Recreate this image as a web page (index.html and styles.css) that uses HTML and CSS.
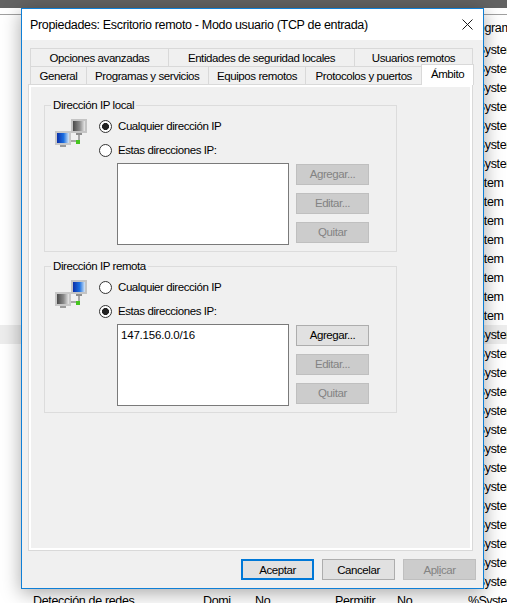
FILE: index.html
```html
<!DOCTYPE html>
<html lang="es">
<head>
<meta charset="utf-8">
<title>Propiedades: Escritorio remoto</title>
<link rel="stylesheet" href="styles.css">
</head>
<body>
<div class="desktop">
  <div class="topbar"></div>
  <div class="listhead"></div>
  <div class="row row-first"><span class="val v-gram">Programa</span></div>
  <div class="rows">
    <div class="row"><span class="val">%System</span></div>
    <div class="row"><span class="val">%System</span></div>
    <div class="row"><span class="val">%System</span></div>
    <div class="row"><span class="val">%System</span></div>
    <div class="row"><span class="val">%System</span></div>
    <div class="row"><span class="val">%System</span></div>
    <div class="row"><span class="val">%System</span></div>
    <div class="row"><span class="val v-tem">System</span></div>
    <div class="row"><span class="val v-tem">System</span></div>
    <div class="row"><span class="val v-tem">System</span></div>
    <div class="row"><span class="val v-tem">System</span></div>
    <div class="row"><span class="val v-tem">System</span></div>
    <div class="row"><span class="val v-tem">System</span></div>
    <div class="row"><span class="val v-tem">System</span></div>
    <div class="row"><span class="val v-tem">System</span></div>
    <div class="row row-sel"><span class="val">%System</span></div>
    <div class="row"><span class="val">%System</span></div>
    <div class="row"><span class="val">%System</span></div>
    <div class="row"><span class="val">%System</span></div>
    <div class="row"><span class="val">%System</span></div>
    <div class="row"><span class="val">%System</span></div>
    <div class="row"><span class="val">%System</span></div>
    <div class="row"><span class="val">%System</span></div>
    <div class="row"><span class="val">%System</span></div>
    <div class="row"><span class="val">%System</span></div>
    <div class="row"><span class="val">%System</span></div>
    <div class="row"><span class="val">%System</span></div>
    <div class="row"><span class="val">%System</span></div>
    <div class="row"><span class="val">%System</span></div>
    <div class="row row-last">
      <span class="c c1">Detección de redes</span>
      <span class="c c2">Domi</span>
      <span class="c c3">No</span>
      <span class="c c4">Permitir</span>
      <span class="c c5">No</span>
      <span class="c c6">%System</span>
    </div>
  </div>
</div>

<section class="dialog">
  <header class="titlebar">
    <h1 class="title">Propiedades: Escritorio remoto - Modo usuario (TCP de entrada)</h1>
    <svg class="close" width="11" height="11" viewBox="0 0 11 11"><path d="M0.5 0.5L10.5 10.5M10.5 0.5L0.5 10.5" stroke="#1a1a1a" stroke-width="1" fill="none"/></svg>
  </header>
  <div class="dbody">
    <div class="tabs">
      <div class="tabrow tabrow-top">
        <div class="tab t-a">Opciones avanzadas</div>
        <div class="tab t-b">Entidades de seguridad locales</div>
        <div class="tab t-c">Usuarios remotos</div>
      </div>
      <div class="tabrow tabrow-bot">
        <div class="tab t-d">General</div>
        <div class="tab t-e">Programas y servicios</div>
        <div class="tab t-f">Equipos remotos</div>
        <div class="tab t-g">Protocolos y puertos</div>
        <div class="tab tab-on">Ámbito</div>
      </div>
    </div>
    <div class="panel">
      <fieldset class="group">
        <legend class="legend">Dirección IP local</legend>
        <div class="gcontent">
          <svg class="netic" width="34" height="32" viewBox="0 0 34 32">
            <defs>
              <linearGradient id="gBlue" x1="0" x2="1" y1="0" y2="0"><stop offset="0" stop-color="#0b2fa8"/><stop offset=".55" stop-color="#1c6fe0"/><stop offset="1" stop-color="#d5e6f5"/></linearGradient>
              <linearGradient id="gGray" x1="0" x2="1" y1="0" y2="0"><stop offset="0" stop-color="#4a4a4a"/><stop offset=".55" stop-color="#8a8a8a"/><stop offset="1" stop-color="#e8e8e8"/></linearGradient>
            </defs>
            <path d="M25 17V24H12" stroke="#a8a8a8" stroke-width="2" fill="none"/>
            <rect x="17" y="2" width="16" height="14" fill="#c4c4c4"/>
            <rect x="19" y="4" width="12" height="10" fill="url(#gGray)"/>
            <rect x="22" y="16" width="6" height="2" fill="#8e8e8e"/>
            <rect x="1" y="14" width="16" height="14" fill="#c8c8c8"/>
            <rect x="3" y="16" width="12" height="10" fill="url(#gBlue)"/>
            <rect x="6" y="28" width="6" height="2" fill="#9a9a9a"/>
            <rect x="22" y="23" width="4" height="4" fill="#46c41f"/>
          </svg>
          <div class="gmain">
            <label class="radio"><span class="dot dot-on"></span><span>Cualquier dirección IP</span></label>
            <label class="radio"><span class="dot"></span><span>Estas direcciones IP:</span></label>
            <div class="listrow">
              <div class="listbox"></div>
              <div class="btncol">
                <div class="btn off">Agregar...</div>
                <div class="btn off">Editar...</div>
                <div class="btn off">Quitar</div>
              </div>
            </div>
          </div>
        </div>
      </fieldset>
      <fieldset class="group group2">
        <legend class="legend">Dirección IP remota</legend>
        <div class="gcontent">
          <svg class="netic" width="34" height="32" viewBox="0 0 34 32">
            <path d="M25 17V24H12" stroke="#a8a8a8" stroke-width="2" fill="none"/>
            <rect x="17" y="2" width="16" height="14" fill="#c4c4c4"/>
            <rect x="19" y="4" width="12" height="10" fill="url(#gBlue)"/>
            <rect x="22" y="16" width="6" height="2" fill="#8e8e8e"/>
            <rect x="1" y="14" width="16" height="14" fill="#c8c8c8"/>
            <rect x="3" y="16" width="12" height="10" fill="url(#gGray)"/>
            <rect x="6" y="28" width="6" height="2" fill="#9a9a9a"/>
            <rect x="22" y="23" width="4" height="4" fill="#46c41f"/>
          </svg>
          <div class="gmain">
            <label class="radio"><span class="dot"></span><span>Cualquier dirección IP</span></label>
            <label class="radio"><span class="dot dot-on"></span><span>Estas direcciones IP:</span></label>
            <div class="listrow">
              <div class="listbox listbox-on">147.156.0.0/16</div>
              <div class="btncol">
                <div class="btn">Agregar...</div>
                <div class="btn off">Editar...</div>
                <div class="btn off">Quitar</div>
              </div>
            </div>
          </div>
        </div>
      </fieldset>
    </div>
    <footer class="footer">
      <div class="btn btn-def">Aceptar</div>
      <div class="btn">Cancelar</div>
      <div class="btn off">Apl<u>i</u>car</div>
    </footer>
  </div>
</section>
</body>
</html>
```
FILE: styles.css
```css
* { box-sizing: border-box; }
html, body { margin: 0; padding: 0; height: 603px; overflow: hidden; }
body { position: relative; width: 507px; background: #fff; font-family: "Liberation Sans", sans-serif; font-size: 11.5px; letter-spacing: -0.42px; color: #000; }

.desktop { height: 603px; overflow: hidden; font-size: 12.5px; letter-spacing: -0.35px; }
.topbar { height: 8px; background: #636363; }
.listhead { height: 7px; border-bottom: 1px solid #a0a0a0; }
.row { height: 19px; line-height: 21px; position: relative; white-space: nowrap; }
.row-first { margin-top: 3px; }
.rows { margin-top: 3px; }
.row-sel { background: #ededed; }
.val { display: block; padding-left: 466px; }
.v-tem { padding-left: 464px; }
.v-gram { padding-left: 466px; }
.row-last { display: flex; }
.c { display: block; flex: none; }
.c1 { margin-left: 33px; width: 170px; }
.c2 { width: 52px; }
.c3 { width: 80px; }
.c4 { width: 62px; }
.c5 { width: 71px; }
.c6 { letter-spacing: -0.6px; }

.dialog { position: absolute; left: 21px; top: 8px; width: 463px; height: 581px; border: 1px solid #0f7fd6; background: #f0f0f0; display: flex; flex-direction: column; box-shadow: 0 4px 18px rgba(0,0,0,.35); }
.titlebar { height: 31px; background: #fff; display: flex; align-items: center; justify-content: space-between; padding: 0 10px 0 8px; flex: none; }
.title { margin: 0; font-weight: 400; font-size: 12.5px; letter-spacing: -0.33px; white-space: nowrap; color: #000; }
.close { display: block; }
.dbody { flex: 1; position: relative; display: flex; flex-direction: column; padding: 8px 9px 8px 6px; }

.tabs { display: flex; flex-direction: column; height: 37px; flex: none; }
.tabrow { display: flex; height: 18px; }
.tabrow-top { padding-left: 2px; }
.tabrow-bot { padding-left: 2px; }
.tab { background: #f0f0f0; border: 1px solid #d9d9d9; border-bottom: 0; margin-left: -1px; text-align: center; line-height: 19px; white-space: nowrap; }
.tab:first-child { margin-left: 0; }
.t-a { width: 139px; }
.t-b { width: 187px; }
.t-c { width: 119px; }
.t-d { width: 57px; }
.t-e { width: 123px; }
.t-f { width: 99px; }
.t-g { width: 117px; }
.tab-on { width: 53px; height: 21px; margin-top: -2px; background: #fff; position: relative; z-index: 2; line-height: 18px; }

.panel { flex: none; margin-top: -1px; width: 445px; background: #f0f0f0; border: 1px solid #d9d9d9; box-shadow: inset 0 0 0 2px #fff; padding: 12px 15px 0; display: flex; flex-direction: column; height: 467px; }
.group { margin: 0; padding: 0 0 0 9px; width: 353px; height: 155px; border: 1px solid #dcdcdc; min-width: 0; flex: none; }
.group2 { margin-top: 6px; }
.legend { padding: 0 2px; margin-left: -3px; line-height: 16px; }
.gcontent { display: flex; }
.netic { display: block; margin: 4px 6px 0 0; flex: none; }
.gmain { flex: 1; display: flex; flex-direction: column; margin-left: 5px; padding-top: 1px; }
.radio { display: flex; align-items: center; height: 24px; gap: 6px; line-height: 25px; }
.dot { width: 13px; height: 13px; border: 1px solid #333; border-radius: 50%; background: #fff; display: block; flex: none; position: relative; }
.dot-on { background: radial-gradient(circle, #222 0 3.2px, #fff 3.8px); }
.listrow { display: flex; gap: 7px; margin-top: 1px; margin-left: 18px; }
.listbox { width: 172px; height: 82px; background: #fff; border: 1px solid #7a7a7a; padding: 1px 3px; line-height: 18px; letter-spacing: -0.2px; }
.btncol { display: flex; flex-direction: column; gap: 8px; padding-top: 1px; }
.btn { width: 73px; height: 21px; background: #e1e1e1; border: 1px solid #adadad; text-align: center; line-height: 19px; }
.off { background: #ccc; border-color: #bfbfbf; color: #838383; }
.footer { display: flex; justify-content: flex-end; gap: 8px; margin-top: 8px; margin-right: -2px; }
.footer .btn { line-height: 20px; }
.footer .btn-def { border: 2px solid #0078d7; line-height: 18px; }
```
